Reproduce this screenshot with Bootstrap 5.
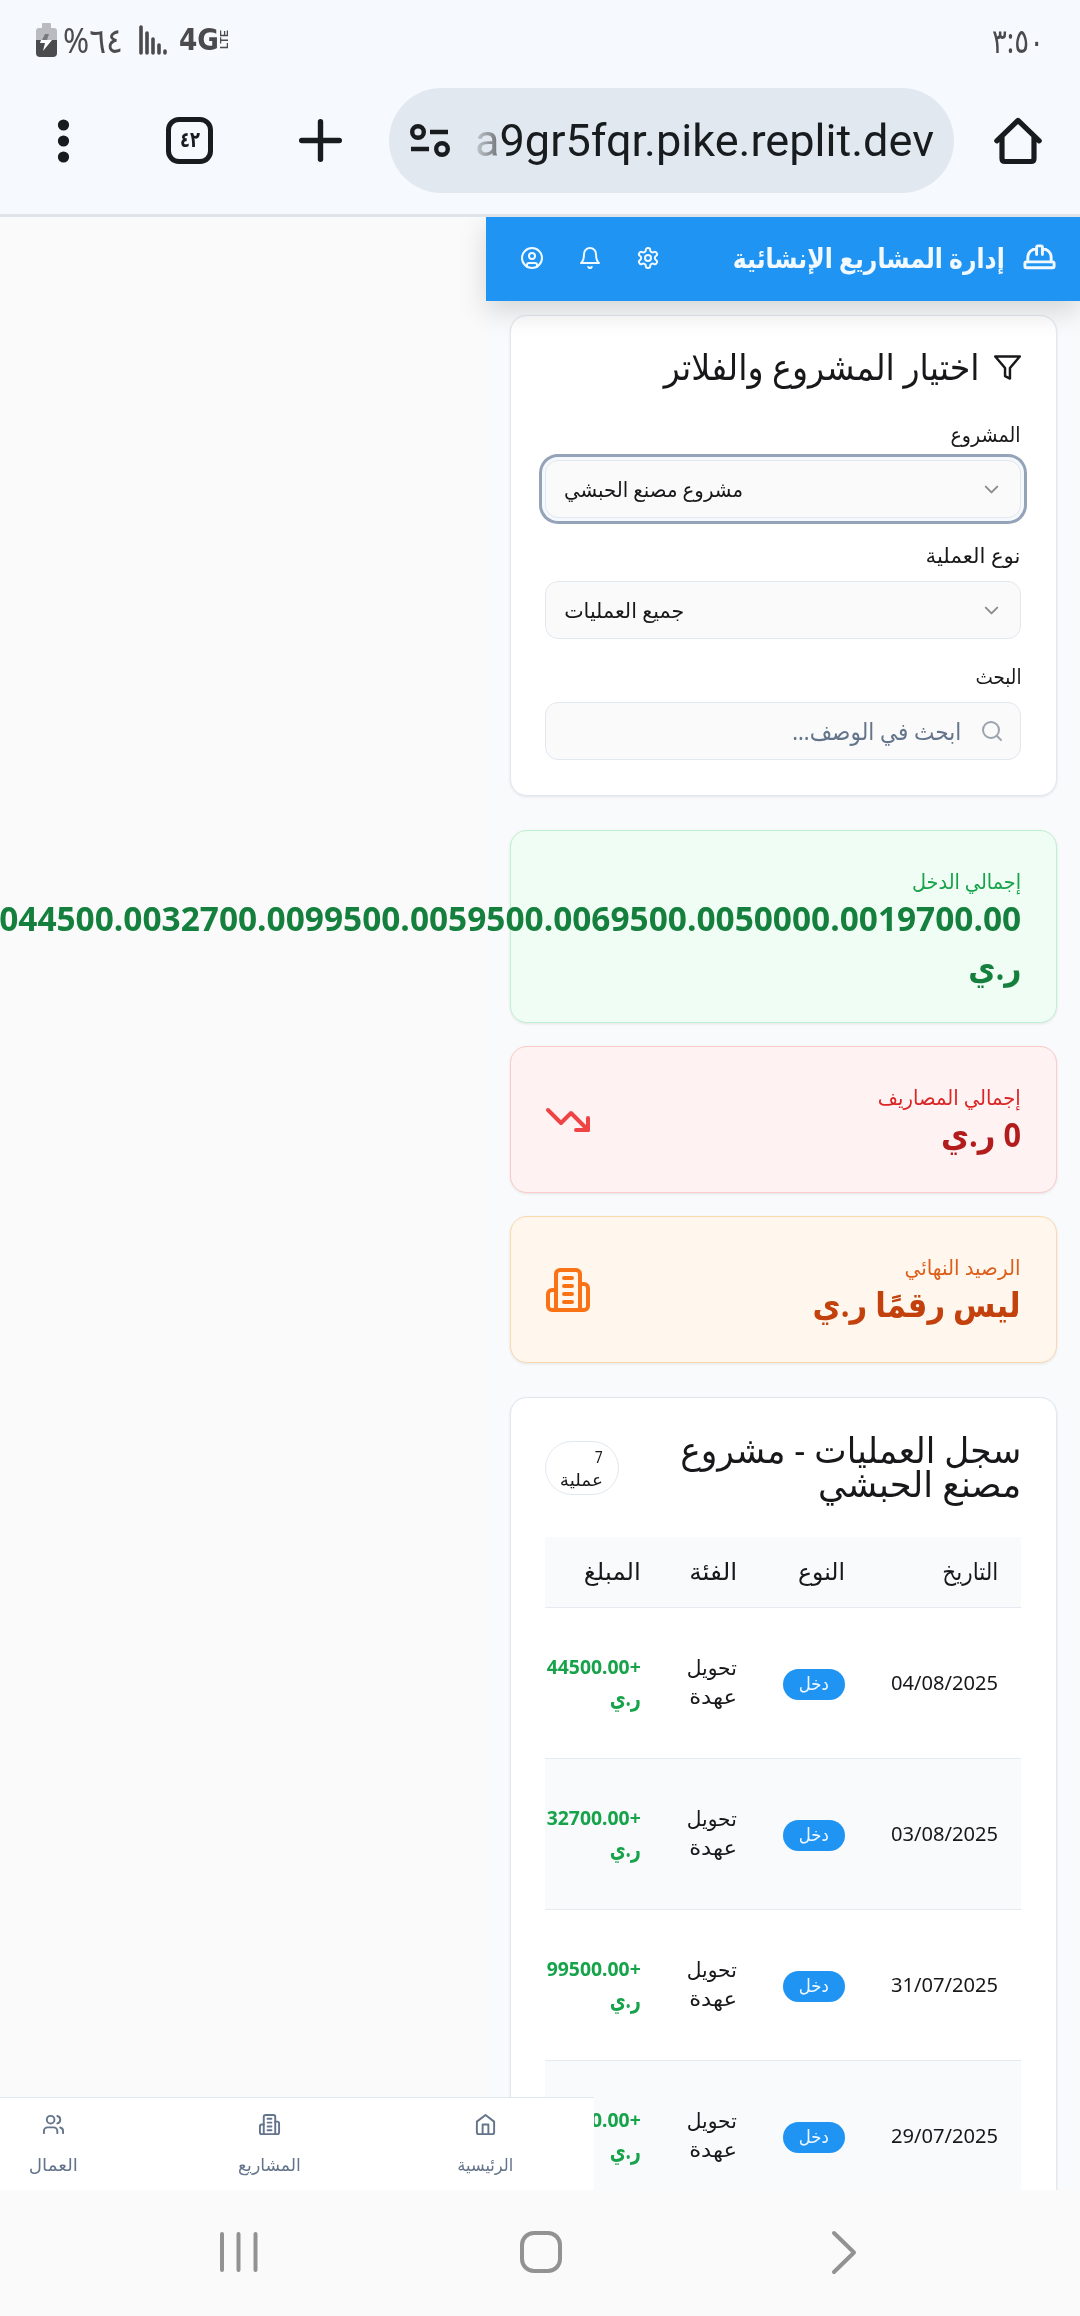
<!DOCTYPE html>
<html lang="ar" dir="rtl">
<head>
<meta charset="utf-8">
<title>إدارة المشاريع الإنشائية</title>
<link href="https://cdn.jsdelivr.net/npm/bootstrap@5.3.0/dist/css/bootstrap.min.css" rel="stylesheet">
<style>
body{width:1080px;height:2316px;overflow:hidden;background:#fafafa;color:#18181b;font-family:"Noto Sans","DejaVu Sans",sans-serif;font-size:20.5px}
svg{display:block;flex:none;overflow:visible}
.ic{fill:none;stroke:currentColor;stroke-width:2;stroke-linecap:round;stroke-linejoin:round}
.fit{display:inline-block;white-space:nowrap;transform-origin:100% 50%}
[dir=ltr] .fit{transform-origin:0 50%}
.statusbar{height:80px;background:#f6f9fe;color:#4b4b4d;padding:0 36px 0 36px}
.battery-text{font-size:35px;line-height:44px;margin-left:6px}
.clock-text{font-size:34px;line-height:44px}
.net-text{font:bold 30px/34px "DejaVu Sans",sans-serif;margin-left:12px;margin-top:-1px}
.lte-text{font:bold 10.5px/10px "Liberation Sans",sans-serif;writing-mode:vertical-rl;transform:rotate(180deg)}
.toolbar{height:137px;background:#f6f9fe;color:#191c1f;border-bottom:3px solid #dee4ea;padding:8px 38px 21px 58px}
.tabs-box{width:47px;height:47px;border:5px solid;border-radius:13px;font-size:22px;line-height:32px;font-weight:bold;margin-left:97px}
.plus-ic{margin-left:86px}
.url-pill{width:565px;height:105px;border-radius:53px;background:#e1e8f0;margin-left:47px;padding-left:21px}
.url-text{font-family:Roboto,sans-serif;font-size:45px;line-height:60px;margin-left:25px}
.url-text .fit{background:linear-gradient(90deg,#c5cad0 0,#777b80 22px,#191c1f 23px);-webkit-background-clip:text;background-clip:text;color:transparent}
.viewport{height:1973px}
.app{width:594px;height:1973px;background:#f8fafc}
.app-head{height:84px;background:#2094f3;color:#f1f9ff;box-shadow:0 10px 26px rgba(0,0,0,.15);z-index:2;position:relative;padding:0 23px 3px 34px}
.app-head h1{font-size:27px;line-height:40px;font-weight:700;padding-right:17px}
.head-icons{gap:34px}
.content-col{padding:14px 23px 0 24px}
.panel{background:#fff;border:1.4px solid #e2e8f0;border-radius:17px;box-shadow:0 1px 3px rgba(0,0,0,.09);padding:0 35px 0 34px}
.filters{height:481px;padding-top:31px;margin-bottom:34px}
.panel-title{font-size:36px;line-height:40px;font-weight:400;gap:14px;margin-bottom:33px}
.lab{line-height:28px;margin-bottom:12px}
.field{height:58px;border:1.4px solid #e2e8f0;border-radius:13px;background:#fafafa;margin-bottom:23px;padding:0 17px 0 18px}
.field.focused{box-shadow:0 0 0 3px #f5f8fc,0 0 0 6px #94a3b8}
.field svg{color:#8c8c8e}
.search{font-size:24px;color:#64748b;gap:19px;padding-right:16px}
.search svg{color:#9ca3af}
.stat{height:147px;padding-top:37px;margin-bottom:23px}
.stat-label{line-height:26px}
.stat-value{font-size:34.5px;line-height:49px;font-weight:700;font-family:"Open Sans","DejaVu Sans",sans-serif;margin-top:-1px}
.stat-icon{margin-top:13px}
.income{height:193px;background:#f0fdf4;border-color:#bff0d0;color:#16a34a}.income .stat-value{color:#15803d}
.expense{background:#fef2f2;border-color:#fecaca;color:#dc2626}.expense .stat-value{color:#b31c1c}.expense svg{color:#ef4444}
.balance{background:#fff7ed;border-color:#fcd9ad;color:#ea580c;margin-bottom:34px}.balance .stat-label{color:#dc5f1c}.balance .stat-value{color:#c2410c}.balance svg{color:#f97316}
.ledger{height:900px;padding-top:35px}
.ledger-title{font-size:36px;line-height:34px;font-weight:400}
.count-pill{width:74px;height:54px;border:1.4px solid #e2e8f0;border-radius:27px;font-size:17px;line-height:23px;padding:3px 15px 0;margin-top:8px}
.ops{table-layout:fixed;width:476px;margin:36px 0 0}
.ops th,.ops td{padding:0 23px 0 0;font-weight:400;text-align:right;vertical-align:middle;border-bottom:1.4px solid #e5e9f0}
.ops th{height:70px;font-size:24px;line-height:32px;padding-bottom:2px}
.ops td{height:151px}
.ops thead tr,.ops tbody tr:nth-child(even){background:#f8fafc}
.ops .kind{line-height:29px;padding-bottom:2px}
.ops .sum{line-height:30px;font-weight:700;color:#16a34a;font-size:19.5px}
.ops .sum .cur{font-size:23px}
.income-pill{display:flex;width:62px;height:31px;border-radius:16px;background:#2094f3;color:#f1f9ff;font-size:18px;line-height:28px;margin-top:3px;justify-content:center}
.tabbar{position:absolute;left:0;bottom:0;width:594px;height:93px;background:#fff;border-top:1.4px solid #e2e8f0;color:#64748b;font-size:17.5px;z-index:3;padding-right:1px}
.tabbar .tab{width:216px;padding-top:15px;gap:15px;line-height:26px;flex:none}
.sysbar{height:126px;background:#fafafa;color:#929292}
</style>
<script src="https://cdn.jsdelivr.net/npm/bootstrap@5.3.0/dist/js/bootstrap.bundle.min.js"></script>
</head>
<body class="m-0">
<svg width="0" height="0" class="position-absolute"><defs>
<g id="building"><path d="M6 22V4a2 2 0 0 1 2-2h8a2 2 0 0 1 2 2v18Z"/><path d="M6 12H4a2 2 0 0 0-2 2v6a2 2 0 0 0 2 2h2"/><path d="M18 9h2a2 2 0 0 1 2 2v9a2 2 0 0 1-2 2h-2"/><path d="M10 6h4M10 10h4M10 14h4M10 18h4"/></g>
</defs></svg>

<div class="statusbar d-flex align-items-center justify-content-between" dir="ltr">
  <div class="d-flex align-items-center">
    <svg width="21" height="34" viewBox="0 0 21 34"><path fill="#b9bbc0" d="M6 1q0-1 1-1h7q1 0 1 1v4h3q3 0 3 3v9H0V8q0-3 3-3h3z"/><path fill="#4b4b4d" d="M0 17h21v13q0 4-4 4H4q-4 0-4-4z"/><path fill="#77797d" d="M9 11h4l-2 6H6z"/><path fill="#fff" d="M5 17h11l-9 11 2-8H4z"/></svg>
    <span class="fit battery-text" data-w="60">%<bdo dir="ltr">٦٤</bdo></span>
    <svg class="ms-3" width="28" height="30" viewBox="0 0 28 30" stroke="currentColor" stroke-width="3.6" stroke-linecap="round"><path d="M2 2v26M8 8v20M14 14v14M20 20v8M26 26v2"/></svg>
    <span class="fit net-text" data-w="40">4G</span>
    <span class="lte-text">LTE</span>
  </div>
  <span class="fit clock-text" data-w="52"><bdo dir="ltr">٣:٥٠</bdo></span>
</div>

<div class="toolbar d-flex align-items-center" dir="ltr">
  <svg width="11" height="44" viewBox="0 0 11 44" fill="currentColor"><circle cx="5.5" cy="6" r="5.6"/><circle cx="5.5" cy="22" r="5.6"/><circle cx="5.5" cy="38" r="5.6"/></svg>
  <div class="tabs-box d-flex justify-content-center"><bdo dir="ltr" class="fit" data-w="20">٤٢</bdo></div>
  <svg class="plus-ic" width="43" height="43" viewBox="0 0 43 43" stroke="currentColor" stroke-width="5.4" stroke-linecap="round"><path d="M21.500 2.700v37.600M2.700 21.500h37.600"/></svg>
  <div class="url-pill d-flex align-items-center">
    <svg width="40" height="34" viewBox="0 0 40 34" fill="none" stroke="currentColor" stroke-width="4.4"><circle cx="8" cy="8" r="5.8"/><path d="M20 8h18M1 25h18"/><circle cx="32" cy="25" r="5.8"/></svg>
    <div class="url-text"><span class="fit" data-w="459">a9gr5fqr.pike.replit.dev</span></div>
  </div>
  <svg class="ms-auto" width="48" height="47" viewBox="0 0 48 47" fill="none" stroke="currentColor" stroke-width="5.2" stroke-linecap="round" stroke-linejoin="round"><path d="M2.800 23.800 24 3.400l21.200 20.400M8 20v21.500q0 3 3 3h26q3 0 3-3V20"/></svg>
</div>

<main class="viewport position-relative overflow-hidden">
  <div class="app">
    <header class="app-head d-flex align-items-center justify-content-between">
      <div class="d-flex align-items-center">
        <svg class="ic" width="35" height="35" viewBox="0 0 24 24"><path d="M2 18a1 1 0 0 0 1 1h18a1 1 0 0 0 1-1v-2a1 1 0 0 0-1-1H3a1 1 0 0 0-1 1v2z"/><path d="M10 10V5a1 1 0 0 1 1-1h2a1 1 0 0 1 1 1v5M4 15v-3a6 6 0 0 1 6-6M14 6a6 6 0 0 1 6 6v3"/></svg>
        <h1 class="m-0"><span class="fit" data-w="272">إدارة المشاريع الإنشائية</span></h1>
      </div>
      <div class="head-icons d-flex">
        <svg class="ic" width="24" height="24" viewBox="0 0 24 24"><path d="M12.220 2h-.44a2 2 0 0 0-2 2v.18a2 2 0 0 1-1 1.730l-.43.25a2 2 0 0 1-2 0l-.15-.08a2 2 0 0 0-2.730.73l-.22.38a2 2 0 0 0 .73 2.730l.15.1a2 2 0 0 1 1 1.720v.51a2 2 0 0 1-1 1.740l-.15.09a2 2 0 0 0-.73 2.730l.22.38a2 2 0 0 0 2.730.73l.15-.08a2 2 0 0 1 2 0l.43.25a2 2 0 0 1 1 1.730V20a2 2 0 0 0 2 2h.44a2 2 0 0 0 2-2v-.18a2 2 0 0 1 1-1.730l.43-.25a2 2 0 0 1 2 0l.15.08a2 2 0 0 0 2.730-.73l.22-.39a2 2 0 0 0-.73-2.730l-.15-.08a2 2 0 0 1-1-1.740v-.5a2 2 0 0 1 1-1.740l.15-.09a2 2 0 0 0 .73-2.730l-.22-.38a2 2 0 0 0-2.730-.73l-.15.08a2 2 0 0 1-2 0l-.43-.25a2 2 0 0 1-1-1.730V4a2 2 0 0 0-2-2z"/><circle cx="12" cy="12" r="3"/></svg>
        <svg class="ic" width="24" height="24" viewBox="0 0 24 24"><path d="M6 8a6 6 0 0 1 12 0c0 7 3 9 3 9H3s3-2 3-9M10.300 21a1.940 1.940 0 0 0 3.400 0"/></svg>
        <svg class="ic" width="24" height="24" viewBox="0 0 24 24"><circle cx="12" cy="12" r="10"/><circle cx="12" cy="10" r="3"/><path d="M7 20.700V19a2 2 0 0 1 2-2h6a2 2 0 0 1 2 2v1.700"/></svg>
      </div>
    </header>
    <div class="content-col">
      <section class="panel filters">
        <h2 class="panel-title d-flex align-items-center"><svg class="ic" width="27" height="27" viewBox="1 1 22 22"><path d="M22 3H2l8 9.460V19l4 2v-8.540z"/></svg><span class="fit" data-w="316">اختيار المشروع والفلاتر</span></h2>
        <div class="lab"><span class="fit" data-w="70">المشروع</span></div>
        <div class="field focused d-flex align-items-center justify-content-between"><svg class="ic" width="23" height="23" viewBox="0 0 24 24"><path d="m6 9 6 6 6-6"/></svg><span class="fit" data-w="179">مشروع مصنع الحبشي</span></div>
        <div class="lab"><span class="fit" data-w="95">نوع العملية</span></div>
        <div class="field d-flex align-items-center justify-content-between"><svg class="ic" width="23" height="23" viewBox="0 0 24 24"><path d="m6 9 6 6 6-6"/></svg><span class="fit" data-w="120">جميع العمليات</span></div>
        <div class="lab"><span class="fit" data-w="46">البحث</span></div>
        <div class="field search d-flex align-items-center"><svg class="ic" width="24" height="24" viewBox="0 0 24 24"><circle cx="11" cy="11" r="8"/><path d="m21 21-4.300-4.300"/></svg><span class="fit" data-w="169">ابحث في الوصف...</span></div>
      </section>

      <section class="panel stat income">
        <div class="stat-label"><span class="fit" data-w="109">إجمالي الدخل</span></div>
        <div class="stat-value"><span class="fit" data-w="1022">044500.0032700.0099500.0059500.0069500.0050000.0019700.00</span><br><span class="fit" data-w="53">ر.ي</span></div>
      </section>
      <section class="panel stat expense d-flex justify-content-between">
        <div><div class="stat-label"><span class="fit" data-w="143">إجمالي المصاريف</span></div>
        <div class="stat-value"><span class="fit" data-w="80">0 ر.ي</span></div></div>
        <svg class="ic stat-icon" width="46" height="46" viewBox="0.500 0.500 23 23"><path d="M16 17h6v-6"/><path d="m22 17-8.500-8.500-5 5L2 7"/></svg>
      </section>
      <section class="panel stat balance d-flex justify-content-between">
        <div><div class="stat-label"><span class="fit" data-w="116">الرصيد النهائي</span></div>
        <div class="stat-value"><span class="fit" data-w="208">ليس رقمًا ر.ي</span></div></div>
        <svg class="ic stat-icon" width="46" height="46" viewBox="0.500 0.500 23 23"><use href="#building"/></svg>
      </section>

      <section class="panel ledger">
        <div class="d-flex justify-content-between align-items-start">
          <h2 class="ledger-title m-0"><span class="fit" data-w="341">سجل العمليات - مشروع</span><br><span class="fit" data-w="203">مصنع الحبشي</span></h2>
          <div class="count-pill"><span class="fit" data-w="8">7</span><br><span class="fit" data-w="43">عملية</span></div>
        </div>
        <table class="ops">
          <colgroup><col style="width:153px"><col style="width:108px"><col style="width:96px"><col style="width:119px"></colgroup>
          <thead><tr><th><span class="fit" data-w="56">التاريخ</span></th><th><span class="fit" data-w="47">النوع</span></th><th><span class="fit" data-w="48">الفئة</span></th><th><span class="fit" data-w="57">المبلغ</span></th></tr></thead>
          <tbody>
            <tr><td><span class="fit" data-w="107">04/08/2025</span></td><td><span class="income-pill"><span class="fit" data-w="30">دخل</span></span></td><td class="kind"><span class="fit" data-w="50">تحويل</span><br><span class="fit" data-w="48">عهدة</span></td><td class="sum"><bdo dir="ltr" class="fit" data-w="94">44500.00+</bdo><br><span class="fit cur" data-w="31">ر.ي</span></td></tr>
            <tr><td><span class="fit" data-w="107">03/08/2025</span></td><td><span class="income-pill"><span class="fit" data-w="30">دخل</span></span></td><td class="kind"><span class="fit" data-w="50">تحويل</span><br><span class="fit" data-w="48">عهدة</span></td><td class="sum"><bdo dir="ltr" class="fit" data-w="94">32700.00+</bdo><br><span class="fit cur" data-w="31">ر.ي</span></td></tr>
            <tr><td><span class="fit" data-w="107">31/07/2025</span></td><td><span class="income-pill"><span class="fit" data-w="30">دخل</span></span></td><td class="kind"><span class="fit" data-w="50">تحويل</span><br><span class="fit" data-w="48">عهدة</span></td><td class="sum"><bdo dir="ltr" class="fit" data-w="94">99500.00+</bdo><br><span class="fit cur" data-w="31">ر.ي</span></td></tr>
            <tr><td><span class="fit" data-w="107">29/07/2025</span></td><td><span class="income-pill"><span class="fit" data-w="30">دخل</span></span></td><td class="kind"><span class="fit" data-w="50">تحويل</span><br><span class="fit" data-w="48">عهدة</span></td><td class="sum"><bdo dir="ltr" class="fit" data-w="94">59500.00+</bdo><br><span class="fit cur" data-w="31">ر.ي</span></td></tr>
          </tbody>
        </table>
      </section>
    </div>
  </div>
  <nav class="tabbar d-flex overflow-hidden">
    <div class="tab d-flex flex-column align-items-center"><svg class="ic" width="23" height="23" viewBox="0 0 24 24"><path d="m3 9 9-7 9 7v11a2 2 0 0 1-2 2H5a2 2 0 0 1-2-2z"/><path d="M9 22V12h6v10"/></svg><span class="fit" data-w="56">الرئيسية</span></div>
    <div class="tab d-flex flex-column align-items-center"><svg class="ic" width="23" height="23" viewBox="0 0 24 24"><use href="#building"/></svg><span class="fit" data-w="63">المشاريع</span></div>
    <div class="tab d-flex flex-column align-items-center"><svg class="ic" width="23" height="23" viewBox="0 0 24 24"><path d="M16 21v-2a4 4 0 0 0-4-4H6a4 4 0 0 0-4 4v2"/><circle cx="9" cy="7" r="4"/><path d="M22 21v-2a4 4 0 0 0-3-3.870M16 3.130a4 4 0 0 1 0 7.750"/></svg><span class="fit" data-w="49">العمال</span></div>
  </nav>
</main>

<div class="sysbar d-flex" dir="ltr">
  <svg width="1080" height="126" viewBox="0 0 1080 126" fill="none" stroke="currentColor" stroke-width="4" stroke-linecap="round"><path d="M222 44v36M238.500 44v36M255.500 44v36"/><rect x="522" y="43" width="38" height="38" rx="12"/><path d="m834 43 20 19.500L834 82" stroke-linejoin="round"/></svg>
</div>
<script>
const fits=[...document.querySelectorAll('.fit')].map(e=>[e,e.getBoundingClientRect().width,+e.dataset.w]);
for(const [e,n,w] of fits){e.style.width=n+'px';e.style.transform='scaleX('+w/n+')';
  const d=w-n;
  if(getComputedStyle(e).transformOrigin.startsWith('0px'))e.style.marginRight=d+'px';else e.style.marginLeft=d+'px';}
</script>
</body>
</html>
